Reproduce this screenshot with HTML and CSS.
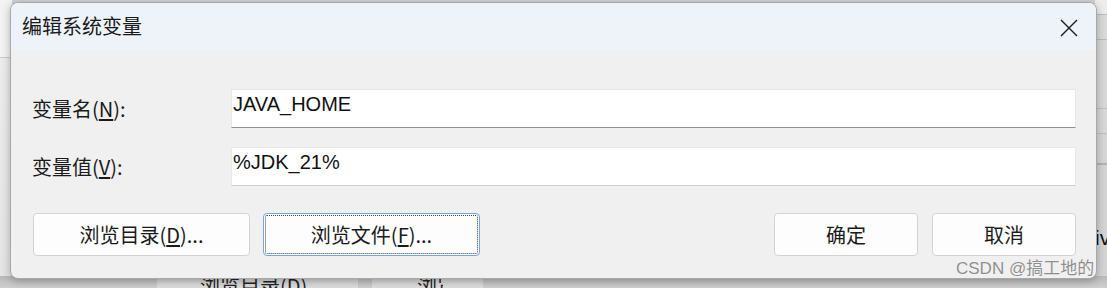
FILE: index.html
```html
<!DOCTYPE html>
<html>
<head>
    <meta content="text/html; charset=utf-8" http-equiv="Content-Type">
    <title>编辑系统变量</title>
    <link rel="stylesheet" href="styles.css">
</head>

<body>
    <!-- window behind the dialog -->
    <div class="behind-left"></div>
    <div class="behind-right">
        <span class="behind-text">iv</span>
    </div>
    <div class="behind-bottom">
        <div class="behind-btn first"><span>浏览目录(D)...</span></div>
        <div class="behind-btn second"><span>浏览</span></div>
        <div class="behind-btn third"><span class="dash"></span></div>
    </div>

    <div class="dialog">
        <div class="titlebar">
            <span class="title">编辑系统变量</span>
            <span class="close">
                <svg width="18" height="18" viewBox="0 0 18 18">
                    <path d="M1 1 L17 17 M17 1 L1 17" stroke="#1b1b1b" stroke-width="1.4" fill="none"/>
                </svg>
            </span>
        </div>

        <div class="content">
            <div class="field">
                <label class="label">变量名(<u>N</u>):</label>
                <div class="input strong">JAVA_HOME</div>
            </div>
            <div class="field">
                <label class="label">变量值(<u>V</u>):</label>
                <div class="input">%JDK_21%</div>
            </div>

            <div class="buttons">
                <div class="left-buttons">
                    <button class="btn wide">浏览目录(<u>D</u>)...</button>
                    <button class="btn wide focused">浏览文件(<u>F</u>)...</button>
                </div>
                <div class="right-buttons">
                    <button class="btn">确定</button>
                    <button class="btn">取消</button>
                </div>
            </div>
        </div>
    </div>

    <div class="watermark">CSDN @搞工地的</div>
</body>
</html>
```

FILE: styles.css
```css
body {
    margin: 0;
    width: 1107px;
    height: 288px;
    overflow: hidden;
    position: relative;
    background: #d2d2d2;
    font-family: "Noto Sans CJK SC", "Liberation Sans", sans-serif;
    color: #1a1a1a;
}

/* Window behind the dialog */
.behind-left {
    position: absolute;
    left: 0;
    top: 0;
    width: 12px;
    height: 288px;
    background: linear-gradient(#f3f3f3 0, #f3f3f3 57px, #c9c9c9 57px, #c9c9c9 58px, #ececec 58px, #e4e4e4 100%);
}

.behind-right {
    position: absolute;
    right: 0;
    top: 0;
    width: 12px;
    height: 288px;
    background:
        linear-gradient(#ededed 0, #ededed 14px, #bdbdbd 14px, #bdbdbd 15px, #dadada 15px, #dadada 39px, #bcbcbc 39px, #bcbcbc 40px,
        #d8d8d8 40px, #d8d8d8 108px, #c0c0c0 108px, #c0c0c0 109px, #d8d8d8 109px, #d8d8d8 133px, #c0c0c0 133px, #c0c0c0 134px,
        #d6d6d6 134px, #d6d6d6 163px, #b4b4b4 163px, #b4b4b4 165px, #d4d4d4 165px);
}

.behind-text {
    position: absolute;
    left: 0;
    top: 226px;
    font-family: "Liberation Sans", sans-serif;
    font-size: 21px;
    color: #111;
}

.behind-bottom {
    position: absolute;
    left: 0;
    right: 0;
    bottom: 0;
    height: 12px;
    background: linear-gradient(#b9b9b9, #cfcfcf);
}

.behind-btn {
    position: absolute;
    top: 0;
    height: 12px;
    overflow: hidden;
    background: linear-gradient(#cfcfcf, #dedede);
}

.behind-btn span {
    position: absolute;
    top: -2px;
    font-size: 20px;
    line-height: 24px;
    color: #222;
    white-space: nowrap;
}

.behind-btn.first {
    left: 157px;
    width: 201px;
}

.behind-btn.first span {
    left: 43px;
}

.behind-btn.second {
    left: 372px;
    width: 111px;
}

.behind-btn.second span {
    left: 45px;
    width: 26px;
    overflow: hidden;
}

.behind-btn.third {
    left: 770px;
    width: 130px;
    background: transparent;
}

.dash {
    position: absolute;
    left: 57px;
    top: 7px;
    width: 10px;
    height: 2px;
    background: #222;
}

/* Dialog */
.dialog {
    position: absolute;
    left: 10px;
    top: 2px;
    width: 1087px;
    height: 277px;
    box-sizing: border-box;
    border: 1px solid #a8a8a8;
    border-radius: 8px;
    overflow: hidden;
    background: #f0f0f0;
    box-shadow: 0 2px 8px rgba(0, 0, 0, 0.28);
    display: flex;
    flex-direction: column;
}

.titlebar {
    height: 47px;
    flex: none;
    background: #eef3fa;
    display: flex;
    align-items: center;
    padding-left: 11px;
    padding-right: 18px;
}

.title {
    font-size: 20px;
    line-height: 24px;
    margin-top: -2px;
}

.close {
    margin-left: auto;
    display: flex;
    margin-top: 2px;
}

.content {
    padding: 39px 20px 0 21px;
    display: flex;
    flex-direction: column;
}

.field {
    display: flex;
    align-items: center;
    margin-bottom: 19px;
}

.field + .field {
    margin-bottom: 27px;
}

.label {
    width: 199px;
    flex: none;
    font-size: 20px;
    line-height: 24px;
    padding-top: 1px;
}

.label u {
    text-underline-offset: 2px;
}

.input {
    flex: 1;
    height: 39px;
    box-sizing: border-box;
    background: #fff;
    border: 1px solid #e8e8e8;
    border-bottom-color: #cdcdcd;
    padding: 3px 0 0 1px;
    font-family: "Liberation Sans", sans-serif;
    font-size: 20px;
    line-height: 23px;
    color: #111;
}

.input.strong {
    border-bottom-color: #8f8f8f;
}

.buttons {
    display: flex;
    justify-content: space-between;
}

.left-buttons,
.right-buttons {
    display: flex;
}

.left-buttons {
    gap: 13px;
    margin-left: 1px;
}

.right-buttons {
    gap: 14px;
}

.btn {
    width: 144px;
    height: 43px;
    box-sizing: border-box;
    background: #fdfdfd;
    border: 1px solid #d3d3d3;
    border-radius: 4px;
    font-family: "Noto Sans CJK SC", "Liberation Sans", sans-serif;
    font-size: 20px;
    line-height: 24px;
    color: #1a1a1a;
    padding: 0;
}

.btn.wide {
    width: 217px;
}

.btn u {
    text-underline-offset: 2px;
}

.btn.focused {
    border-color: #6fa8ea;
    outline: 1px dotted #444;
    outline-offset: -3px;
}

.watermark {
    position: absolute;
    left: 956px;
    top: 258px;
    font-family: "Liberation Sans", "Noto Sans CJK SC", sans-serif;
    font-size: 17px;
    line-height: 22px;
    color: #8e8e8e;
    text-shadow: 0 0 1px #fff;
    white-space: nowrap;
}
```
